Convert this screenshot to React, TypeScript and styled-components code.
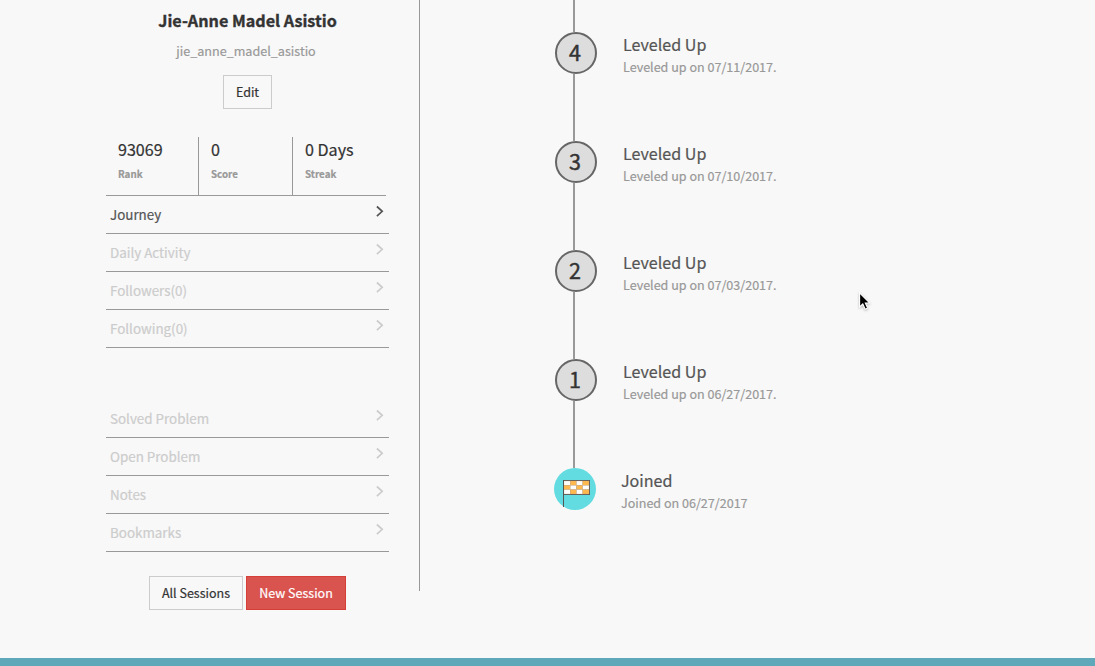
import React from "react";
import styled, { createGlobalStyle } from "styled-components";

const GlobalStyle = createGlobalStyle`
  * { box-sizing: border-box; }
  body {
    margin: 0;
    background: #f8f8f8;
    color: #333;
    font-family: "Noto Sans CJK SC", "Noto Sans", sans-serif;
    -webkit-text-stroke: 0.2px currentColor;
    overflow: hidden;
  }
`;

const Page = styled.div`
  height: 666px;
  display: flex;
  flex-direction: column;
  justify-content: space-between;
`;

const Columns = styled.div`
  display: flex;
  align-items: flex-start;
`;

const Sidebar = styled.aside`
  width: 419px;
  padding: 7px 30px 0 106px;
  display: flex;
  flex-direction: column;
`;

const Name = styled.h1`
  margin: 0;
  font-size: 16.15px;
  font-weight: 700;
  line-height: 26px;
  text-align: center;
  white-space: nowrap;
  -webkit-text-stroke-width: 0.35px;
`;

const Username = styled.div`
  margin: 8px 3px 0 0;
  font-size: 12.6px;
  line-height: 20px;
  text-align: center;
  color: #999;
`;

const Button = styled.button<{ $primary?: boolean; $width: number }>`
  width: ${(p) => p.$width}px;
  height: 34px;
  padding: 0;
  border: 1px solid ${(p) => (p.$primary ? "#d43f3a" : "#ccc")};
  background: ${(p) => (p.$primary ? "#d9534f" : "#f8f8f8")};
  color: ${(p) => (p.$primary ? "#fff" : "#333")};
  font-family: inherit;
  font-size: 12.5px;
  line-height: 32px;
  white-space: nowrap;
`;

const ButtonRow = styled.div<{ $top: number }>`
  display: flex;
  justify-content: center;
  gap: 3px;
  margin-top: ${(p) => p.$top}px;
`;

const Stats = styled.div`
  display: grid;
  grid-template-columns: 93px 94px 1fr;
  width: 280px;
  height: 59px;
  margin-top: 28px;
  border-bottom: 1px solid #999;
`;

const Stat = styled.div`
  padding-left: 12px;
  &:not(:last-child) { border-right: 1px solid #999; }
`;

const StatValue = styled.div`
  font-size: 16.1px;
  line-height: 24px;
  white-space: nowrap;
`;

const StatLabel = styled.div`
  margin-top: 4px;
  font-size: 9.8px;
  font-weight: 700;
  line-height: 18px;
  color: #999;
`;

const Menu = styled.nav<{ $top?: number }>`
  margin-top: ${(p) => p.$top || 0}px;
`;

const MenuItem = styled.div<{ $active?: boolean }>`
  display: flex;
  justify-content: space-between;
  align-items: flex-start;
  height: 38px;
  padding: 9px 4px 0 4px;
  border-bottom: 1px solid #999;
  font-size: 13.4px;
  line-height: 18px;
  color: ${(p) => (p.$active ? "#555" : "#ccc")};
  svg { display: block; }
`;

const Journey = styled.main`
  flex: 1;
  height: 591px;
  border-left: 1px solid #999;
  padding-left: 134px;
`;

const Entry = styled.div`
  display: flex;
  align-items: flex-start;
`;

const Rail = styled.div`
  width: 44px;
  flex: none;
`;

const Line = styled.div<{ $height: number }>`
  width: 2px;
  height: ${(p) => p.$height}px;
  margin-left: 19px;
  background: #999;
`;

const Badge = styled.div`
  width: 42px;
  height: 42px;
  margin-left: 1px;
  border: 2px solid #666;
  border-radius: 50%;
  background: #ddd;
  font-size: 21.5px;
  line-height: 36px;
  text-align: center;
  padding-right: 2px;
  -webkit-text-stroke-width: 0.45px;
`;

const JoinedBadge = styled.div`
  width: 42px;
  height: 42px;
  border-radius: 50%;
  background: #62dce0;
  svg { display: block; }
`;

const EntryText = styled.div<{ $joined?: boolean }>`
  margin-left: ${(p) => (p.$joined ? 23 : 25)}px;
`;

const EntryTitle = styled.div`
  font-size: 16.1px;
  line-height: 24px;
  color: #555;
`;

const EntryDate = styled.div`
  margin-top: 2px;
  font-size: 12.55px;
  line-height: 18px;
  color: #999;
`;

const Footer = styled.footer`
  height: 8px;
  background: #5fa8b9;
`;

const Pointer = styled.svg`
  position: absolute;
  left: 857px;
  top: 291px;
  filter: drop-shadow(0 1px 1px rgba(0, 0, 0, 0.25));
`;

const Chevron = () => (
  <svg width="9" height="13" viewBox="0 0 9 13" fill="none" stroke="currentColor" strokeWidth="1.7">
    <path d="M0.9 1.5 L6.2 6.3 L0.9 11.1" />
  </svg>
);

const flagCells = [
  [1, 0, 1, 0],
  [0, 1, 0, 1],
  [1, 0, 1, 0],
];

const Flag = () => (
  <svg width="42" height="42" viewBox="0 0 42 42">
    <rect x="9" y="12" width="27" height="15" fill="#555" />
    {flagCells.map((row, y) =>
      row.map((c, x) => (
        <rect
          key={`${x}-${y}`}
          x={10 + x * 6.25}
          y={13 + y * 4.33}
          width="6.25"
          height="4.33"
          fill={c ? "#fff" : "#ffb84d"}
          stroke="#d3b489"
          strokeWidth="0.3"
        />
      ))
    )}
    <rect x="9" y="12" width="1" height="27" fill="#555" />
  </svg>
);

const profileLinks = ["Journey", "Daily Activity", "Followers(0)", "Following(0)"];
const problemLinks = ["Solved Problem", "Open Problem", "Notes", "Bookmarks"];
const levels = [
  { level: 4, date: "07/11/2017" },
  { level: 3, date: "07/10/2017" },
  { level: 2, date: "07/03/2017" },
  { level: 1, date: "06/27/2017" },
];

export default function App() {
  return (
    <Page>
      <GlobalStyle />
      <Columns>
        <Sidebar>
          <Name>Jie-Anne Madel Asistio</Name>
          <Username>jie_anne_madel_asistio</Username>
          <ButtonRow $top={14}>
            <Button $width={49}>Edit</Button>
          </ButtonRow>
          <Stats>
            <Stat>
              <StatValue>93069</StatValue>
              <StatLabel>Rank</StatLabel>
            </Stat>
            <Stat>
              <StatValue>0</StatValue>
              <StatLabel>Score</StatLabel>
            </Stat>
            <Stat>
              <StatValue>0 Days</StatValue>
              <StatLabel>Streak</StatLabel>
            </Stat>
          </Stats>
          <Menu>
            {profileLinks.map((label, i) => (
              <MenuItem key={label} $active={i === 0}>
                {label}
                <Chevron />
              </MenuItem>
            ))}
          </Menu>
          <Menu $top={52}>
            {problemLinks.map((label) => (
              <MenuItem key={label}>
                {label}
                <Chevron />
              </MenuItem>
            ))}
          </Menu>
          <ButtonRow $top={24}>
            <Button $width={94}>All Sessions</Button>
            <Button $width={100} $primary>
              New Session
            </Button>
          </ButtonRow>
        </Sidebar>
        <Journey>
          <Line $height={32} />
          {levels.map(({ level, date }) => (
            <Entry key={level}>
              <Rail>
                <Badge>{level}</Badge>
                <Line $height={67} />
              </Rail>
              <EntryText>
                <EntryTitle>Leveled Up</EntryTitle>
                <EntryDate>Leveled up on {date}.</EntryDate>
              </EntryText>
            </Entry>
          ))}
          <Entry>
            <Rail>
              <JoinedBadge>
                <Flag />
              </JoinedBadge>
            </Rail>
            <EntryText $joined>
              <EntryTitle>Joined</EntryTitle>
              <EntryDate>Joined on 06/27/2017</EntryDate>
            </EntryText>
          </Entry>
        </Journey>
      </Columns>
      <Footer />
      <Pointer width="16" height="22" viewBox="0 0 16 22">
        <path
          d="M2.6 1.8 L2.6 16 L5.8 13 L8.2 18.2 L10.6 17.1 L8.3 12.1 L12.6 11.8 Z"
          fill="#000"
          stroke="#fff"
          strokeWidth="1.1"
        />
      </Pointer>
    </Page>
  );
}
